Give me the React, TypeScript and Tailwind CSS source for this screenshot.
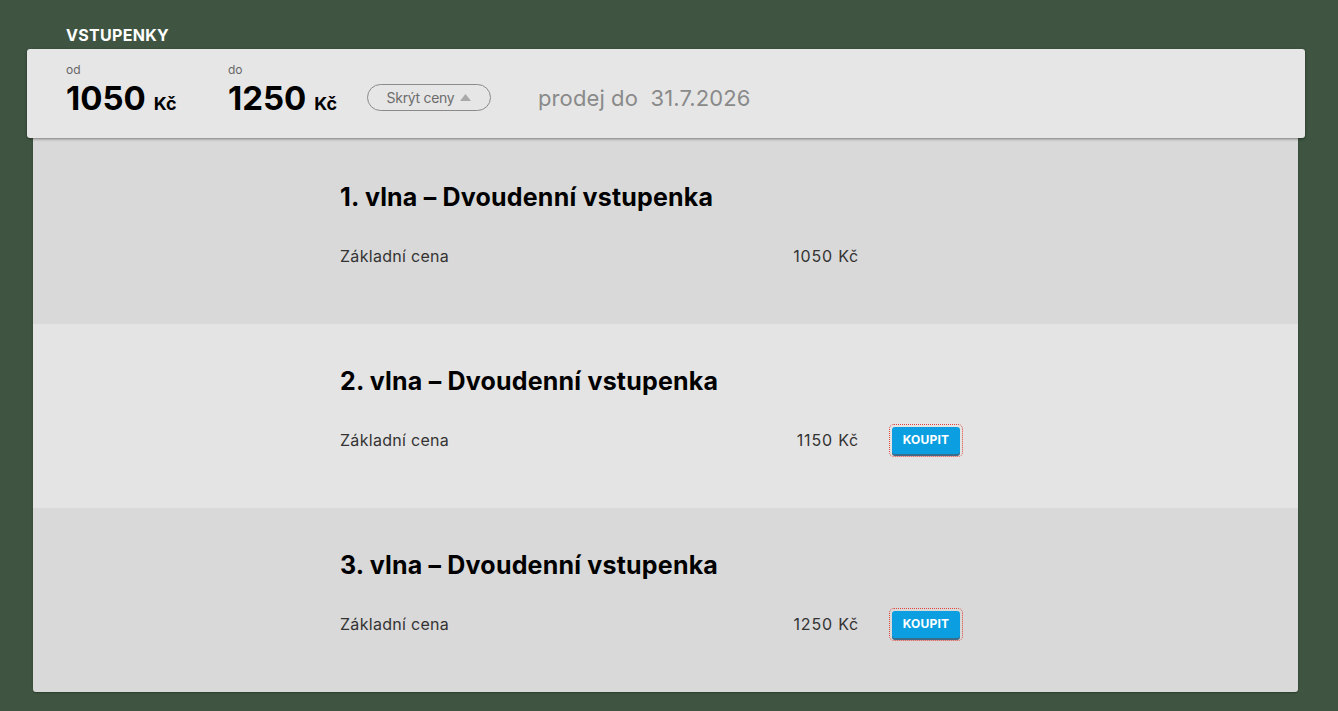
import React from "react";

const rows = [
  { title: "1. vlna – Dvoudenní vstupenka", price: "1050 Kč", buy: false },
  { title: "2. vlna – Dvoudenní vstupenka", price: "1150 Kč", buy: true },
  { title: "3. vlna – Dvoudenní vstupenka", price: "1250 Kč", buy: true },
];

export default function App() {
  return (
    <div
      className="w-[1338px] h-[711px] bg-[#3f5541] overflow-hidden"
      style={{ fontFamily: "Inter, 'Noto Sans', sans-serif" }}
    >
      <div className="pt-[26px] pl-[66px] h-[49px]">
        <h2 className="text-white font-bold text-[16px] leading-[18px] tracking-[0.3px]">VSTUPENKY</h2>
      </div>
      <div className="mx-[27px] w-[1278px] h-[89px] bg-[#e6e6e6] rounded-[3px] shadow-[0_1px_3px_rgba(0,0,0,0.45)] relative z-10 flex items-start pl-[39px] pt-[14px]">
        <div className="w-[162px]">
          <div className="text-[12px] leading-[14px] text-[#666]">od</div>
          <div className="flex items-baseline mt-[3px] text-black font-bold">
            <span className="text-[33px] leading-[37px]">1050</span>
            <span className="text-[18px] ml-[8px]">Kč</span>
          </div>
        </div>
        <div className="w-[139px]">
          <div className="text-[12px] leading-[14px] text-[#666]">do</div>
          <div className="flex items-baseline mt-[3px] text-black font-bold">
            <span className="text-[33px] leading-[37px]">1250</span>
            <span className="text-[18px] ml-[8px]">Kč</span>
          </div>
        </div>
        <div className="mt-[21px] h-[27px] w-[124px] border border-[#8a8a8a] rounded-full flex items-center justify-center gap-[6px] text-[14px] text-[#6d6d6d] tracking-[-0.3px]">
          <span>Skrýt ceny</span>
          <svg width="11" height="7" viewBox="0 0 11 7"><path d="M5.5 0 L11 7 L0 7 Z" fill="#a9a9a9" /></svg>
        </div>
        <div className="mt-[20px] ml-[47px] text-[22px] leading-[30px] text-[#8a8a8a] tracking-[0.1px]">
          prodej do&nbsp; 31.7.2026
        </div>
      </div>
      <div className="mx-[33px] w-[1265px] rounded-b-[3px] overflow-hidden shadow-[0_1px_2px_rgba(0,0,0,0.3)]">
        {rows.map((r, i) => (
          <div
            key={i}
            className={`${i === 1 ? "bg-[#e4e4e4]" : "bg-[#d9d9d9]"} ${i === 0 ? "h-[186px] pt-[44px]" : "h-[184px] pt-[42px]"} pl-[307px]`}
          >
            <h3 className="text-[25px] leading-[30px] font-bold text-black tracking-[0.2px]">{r.title}</h3>
            <div className="flex items-center mt-[29px] h-[30px]">
              <div className="w-[340px] text-[16px] text-[#333] tracking-[0.3px]">Základní cena</div>
              <div className="w-[179px] text-right text-[16px] text-[#333] tracking-[0.8px]">{r.price}</div>
              {r.buy && (
                <button className="ml-[31px] h-[31px] w-[72px] rounded-[4px] outline-1 outline-dotted outline-[#e0463a] p-[2px] flex">
                  <span className="flex-1 bg-[#0b9fe2] rounded-[3px] text-white font-bold text-[12px] tracking-[0.2px] flex items-center justify-center shadow-[0_2px_0_#3d6b8a]">KOUPIT</span>
                </button>
              )}
            </div>
          </div>
        ))}
      </div>
    </div>
  );
}
